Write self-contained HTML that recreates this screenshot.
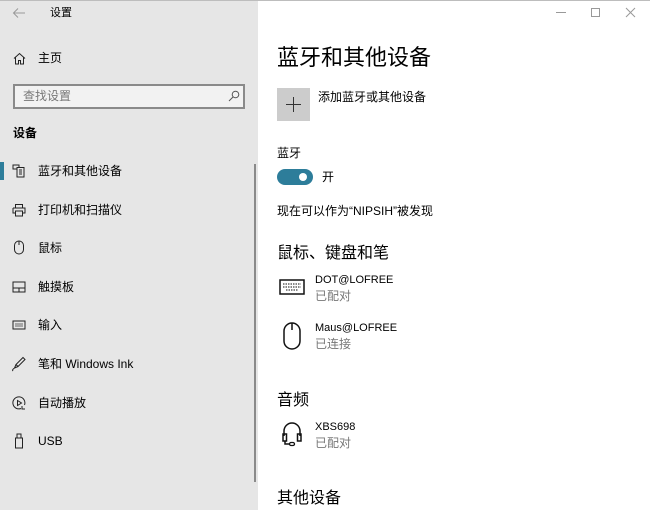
<!DOCTYPE html>
<html><head><meta charset="utf-8"><style>
*{margin:0;padding:0;box-sizing:border-box}
body{width:650px;height:510px;overflow:hidden;font-family:"Liberation Sans","Noto Sans CJK SC",sans-serif;color:#000;background:#fff;position:relative}
.t{position:absolute;white-space:nowrap;line-height:1}
#left{position:absolute;left:0;top:0;width:258px;height:510px;background:#e6e6e6}
#topline{position:absolute;left:0;top:0;width:650px;height:1px;background:#bdbdbd}
.ic{position:absolute}
.l{font-size:12px}
.s{font-size:11px}
</style></head><body>
<div id="left">
 <svg class="ic" style="left:12px;top:7px" width="14" height="12" viewBox="0 0 14 12"><path d="M13 6H2M6 1.5L1.5 6 6 10.5" stroke="#999" fill="none" stroke-width="1"/></svg>
 <div class="t" style="left:50px;top:8px;font-size:11px">设置</div>
 <svg class="ic" style="left:13px;top:52px" width="13" height="13" viewBox="0 0 13 13"><path d="M1 6.5L6.5 1.5 12 6.5M2.5 5.5V12H5.5V8.5H7.5V12H10.5V5.5" stroke="#222" fill="none"/></svg>
 <div class="t l" style="left:38px;top:52px">主页</div>
 <div style="position:absolute;left:13px;top:84px;width:232px;height:25px;border:2px solid #8a8a8a;background:#f2f2f2"></div>
 <div class="t l" style="left:23px;top:90px;color:#777">查找设置</div>
 <svg class="ic" style="left:228px;top:90px" width="12" height="12" viewBox="0 0 12 12"><circle cx="7.5" cy="4.5" r="3.3" stroke="#555" fill="none"/><path d="M5 7L1 11" stroke="#555"/></svg>
 <div class="t l" style="left:13px;top:127px;font-weight:bold">设备</div>
 <div style="position:absolute;left:0;top:162px;width:4px;height:18px;background:#2d7d9a"></div>
 <svg class="ic" style="left:12px;top:164px" width="14" height="14" viewBox="0 0 14 14"><rect x="1" y="1" width="6" height="4" fill="none" stroke="#222"/><rect x="5" y="3.5" width="7" height="9.5" fill="#e6e6e6" stroke="#222"/><path d="M7 6h3M7 8h3M7 10h3" stroke="#222"/></svg>
 <div class="t l" style="left:38px;top:165px">蓝牙和其他设备</div>
 <svg class="ic" style="left:12px;top:203px" width="14" height="14" viewBox="0 0 14 14"><path d="M3.5 5V1.5h7V5M1 5h12v5h-2.5M3.5 10H1V5M3.5 8h7v5h-7z" stroke="#222" fill="none"/></svg>
 <div class="t l" style="left:38px;top:204px">打印机和扫描仪</div>
 <svg class="ic" style="left:13px;top:240px" width="12" height="16" viewBox="0 0 12 16"><rect x="1.5" y="1" width="9" height="13" rx="4.5" stroke="#222" fill="none"/><path d="M6 1v4" stroke="#222"/></svg>
 <div class="t l" style="left:38px;top:242px">鼠标</div>
 <svg class="ic" style="left:12px;top:281px" width="14" height="12" viewBox="0 0 14 12"><rect x="1" y="1" width="12" height="10" stroke="#222" fill="none"/><path d="M1 7h12M7 7v4" stroke="#222"/></svg>
 <div class="t l" style="left:38px;top:281px">触摸板</div>
 <svg class="ic" style="left:12px;top:320px" width="14" height="10" viewBox="0 0 14 10"><rect x="1" y="1" width="12" height="8" stroke="#222" fill="none"/><path d="M3 4h8M3 6h8" stroke="#666"/></svg>
 <div class="t l" style="left:38px;top:319px">输入</div>
 <svg class="ic" style="left:11px;top:356px" width="15" height="16" viewBox="0 0 15 16"><path d="M12 1.5L14 3.5 7 10.5 5 8.5zM5 8.5L3.5 12 7 10.5M3.5 12C2 13 1 14 2 15" stroke="#222" fill="none"/></svg>
 <div class="t l" style="left:38px;top:358px">笔和 Windows Ink</div>
 <svg class="ic" style="left:12px;top:396px" width="14" height="14" viewBox="0 0 14 14"><path d="M9 12.5A6 6 0 1 1 12.5 9" stroke="#222" fill="none"/><path d="M5.5 4.5v5l4-2.5z" stroke="#222" fill="none"/><path d="M10 10v3h3" stroke="#222" fill="none"/></svg>
 <div class="t l" style="left:38px;top:397px">自动播放</div>
 <svg class="ic" style="left:14px;top:433px" width="10" height="16" viewBox="0 0 10 16"><path d="M3 1h4v4H3zM1.5 5h7v10h-7z" stroke="#222" fill="none"/></svg>
 <div class="t l" style="left:38px;top:435px">USB</div>
 <div style="position:absolute;left:254px;top:164px;width:2px;height:318px;background:#8a8a8a"></div>
</div>
<div id="topline"></div>
<div style="position:absolute;left:556px;top:12px;width:10px;height:1px;background:#999"></div>
<div style="position:absolute;left:591px;top:8px;width:9px;height:9px;border:1px solid #999"></div>
<svg class="ic" style="left:625px;top:7px" width="11" height="11" viewBox="0 0 11 11"><path d="M1 1l9 9M10 1l-9 9" stroke="#999"/></svg>
<div class="t" style="left:277px;top:47px;font-size:22px">蓝牙和其他设备</div>
<div style="position:absolute;left:277px;top:88px;width:33px;height:33px;background:#cccccc"></div>
<svg class="ic" style="left:286px;top:97px" width="15" height="15" viewBox="0 0 15 15"><path d="M7.5 0v15M0 7.5h15" stroke="#333"/></svg>
<div class="t l" style="left:318px;top:91px">添加蓝牙或其他设备</div>
<div class="t l" style="left:277px;top:147px">蓝牙</div>
<div style="position:absolute;left:277px;top:169px;width:36px;height:16px;border-radius:8px;background:#2d7d9a"></div>
<div style="position:absolute;left:299px;top:173px;width:8px;height:8px;border-radius:50%;background:#fff"></div>
<div class="t l" style="left:322px;top:171px">开</div>
<div class="t l" style="left:277px;top:205px">现在可以作为“NIPSIH”被发现</div>
<div class="t" style="left:277px;top:246px;font-size:16px">鼠标、键盘和笔</div>
<svg class="ic" style="left:279px;top:279px" width="26" height="16" viewBox="0 0 26 16"><rect x="1" y="1" width="24" height="14" stroke="#111" fill="none" stroke-width="1.5"/><path d="M4 5h18M4 8h18M7 11h12" stroke="#111" stroke-dasharray="1.5 1"/></svg>
<div class="t s" style="left:315px;top:275px">DOT@LOFREE</div>
<div class="t l" style="left:315px;top:290px;color:#777">已配对</div>
<svg class="ic" style="left:282px;top:321px" width="20" height="30" viewBox="0 0 20 30"><rect x="2" y="2" width="16" height="26" rx="8" stroke="#111" fill="none" stroke-width="1.5"/><path d="M10 2v7" stroke="#111" stroke-width="1.5"/></svg>
<div class="t s" style="left:315px;top:323px">Maus@LOFREE</div>
<div class="t l" style="left:315px;top:338px;color:#777">已连接</div>
<div class="t" style="left:277px;top:393px;font-size:16px">音频</div>
<svg class="ic" style="left:281px;top:420px" width="22" height="28" viewBox="0 0 22 28"><path d="M3 16V11a8 8 0 0 1 16 0v5" stroke="#111" fill="none" stroke-width="1.5"/><rect x="2" y="14" width="3.5" height="7" stroke="#111" fill="none" stroke-width="1.5"/><rect x="16.5" y="14" width="3.5" height="7" stroke="#111" fill="none" stroke-width="1.5"/><path d="M4 21v3h5" stroke="#111" fill="none" stroke-width="1.5"/><rect x="8.5" y="22.5" width="5" height="3" rx="1.5" stroke="#111" fill="none" stroke-width="1.3"/></svg>
<div class="t s" style="left:315px;top:422px">XBS698</div>
<div class="t l" style="left:315px;top:437px;color:#777">已配对</div>
<div class="t" style="left:277px;top:491px;font-size:16px">其他设备</div>
</body></html>
